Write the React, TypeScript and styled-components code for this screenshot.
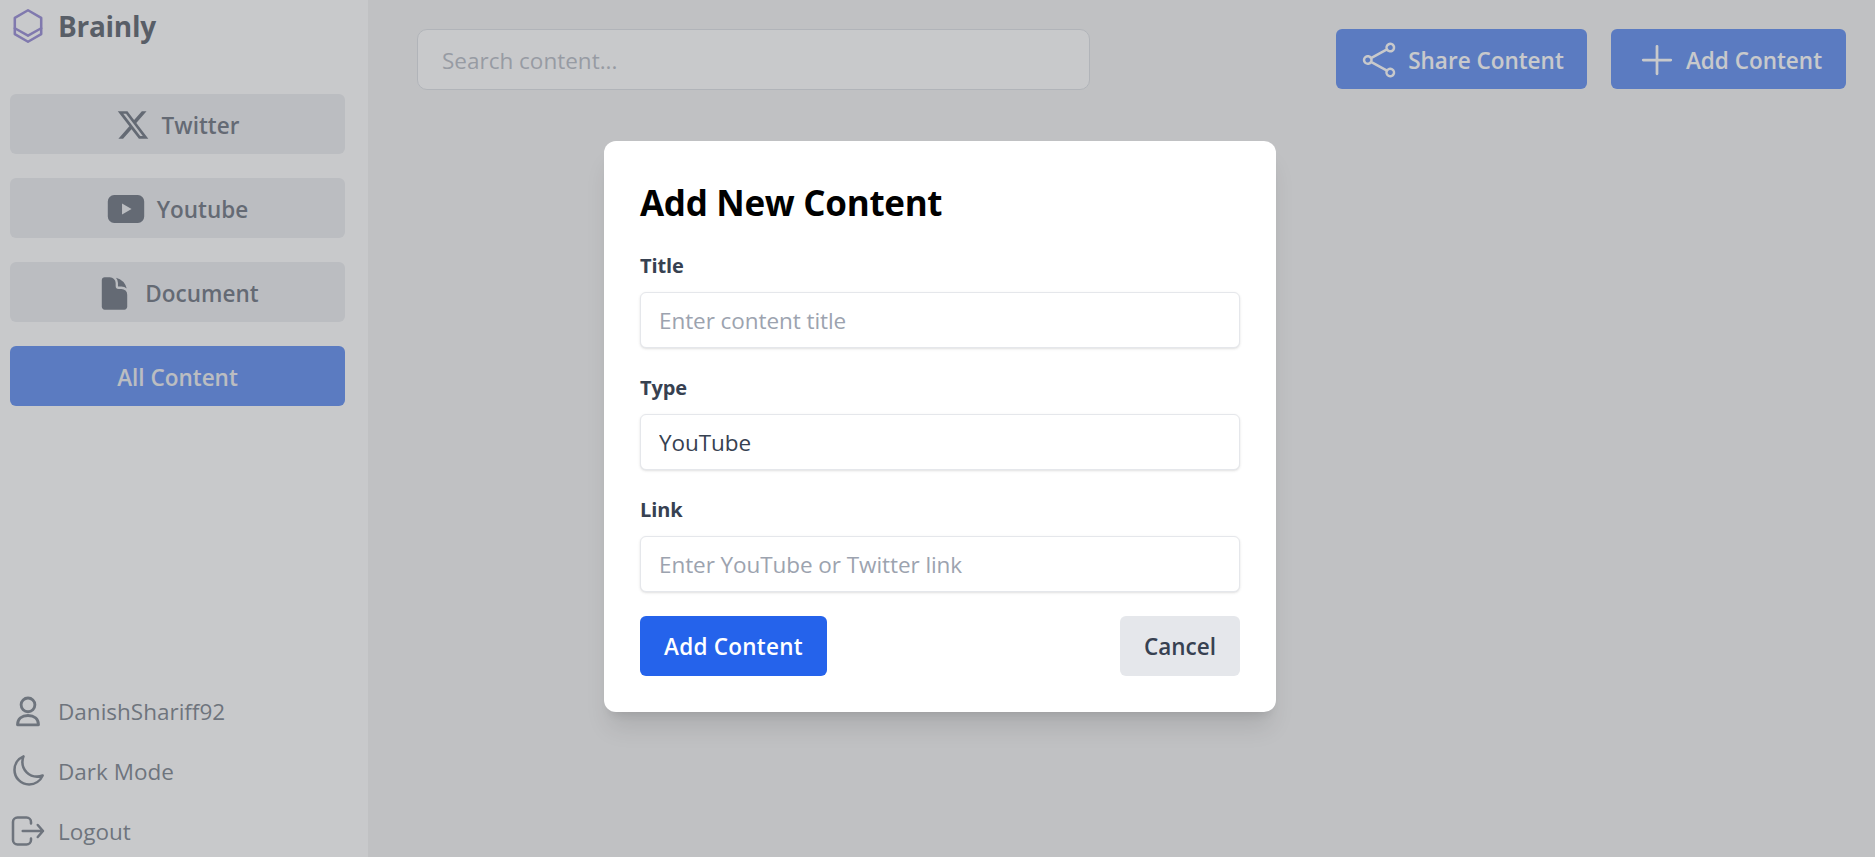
import styled, { createGlobalStyle } from 'styled-components';
import type { ReactNode } from 'react';

const GlobalStyle = createGlobalStyle`
  html, body {
    margin: 0;
    padding: 0;
    height: 100%;
    overflow: hidden;
    font-family: "Open Sans", "Noto Sans", "Liberation Sans", sans-serif;
  }
  * { box-sizing: border-box; }
`;

const Page = styled.div`
  position: relative;
  display: flex;
  width: 100%;
  height: 857px;
  background: #efefef;
`;

const Sidebar = styled.aside`
  display: flex;
  flex-direction: column;
  width: 368px;
  flex-shrink: 0;
  padding: 0 23px 0 10px;
  background: #ffffff;
`;

const Brand = styled.div`
  display: flex;
  align-items: center;
  gap: 12px;
  height: 52px;
  margin-bottom: 42px;
  font-size: 28px;
  font-weight: 700;
  letter-spacing: -0.3px;
  color: #1f2937;
`;

const Nav = styled.nav`
  display: flex;
  flex-direction: column;
  gap: 24px;
`;

const NavButton = styled.button<{ $active?: boolean }>`
  display: flex;
  align-items: center;
  justify-content: center;
  gap: 12px;
  height: 60px;
  padding: 2px 0 0;
  border: 0;
  border-radius: 6px;
  font: inherit;
  font-size: 22.5px;
  font-weight: 600;
  background: ${p => (p.$active ? '#2563eb' : '#e5e7eb')};
  color: ${p => (p.$active ? '#e5e7eb' : '#374151')};
`;

const SidebarFooter = styled.div`
  display: flex;
  flex-direction: column;
  gap: 24px;
  margin-top: auto;
  padding-bottom: 8px;
`;

const FooterItem = styled.div`
  display: flex;
  align-items: center;
  gap: 12px;
  height: 36px;
  font-size: 22.5px;
  color: #4b5563;
`;

const Main = styled.main`
  flex: 1;
  padding: 29px 29px 0 49px;
`;

const TopBar = styled.header`
  display: flex;
  justify-content: space-between;
  align-items: flex-start;
`;

const Search = styled.input`
  width: 673px;
  height: 61px;
  padding: 2px 24px 0;
  border: 1px solid #d1d5db;
  border-radius: 10px;
  background: #ffffff;
  font: inherit;
  font-size: 22.5px;
  &::placeholder { color: #9ca3af; opacity: 1; }
`;

const TopActions = styled.div`
  display: flex;
  gap: 24px;
`;

const ActionButton = styled.button<{ $width: number; $gap: number }>`
  display: flex;
  align-items: center;
  justify-content: center;
  gap: ${p => p.$gap}px;
  width: ${p => p.$width}px;
  height: 60px;
  padding: 2px 0 0;
  border: 0;
  border-radius: 6px;
  background: #2563eb;
  color: #ffffff;
  font: inherit;
  font-size: 22.5px;
  font-weight: 600;
`;

const Overlay = styled.div`
  position: absolute;
  inset: 0;
  display: flex;
  align-items: center;
  justify-content: center;
  padding: 0 0 5px 5px;
  background: rgba(145, 147, 151, 0.5);
`;

const Modal = styled.form`
  display: flex;
  flex-direction: column;
  gap: 26px;
  width: 672px;
  padding: 36px;
  border-radius: 12px;
  background: #ffffff;
  box-shadow: 0 20px 25px -5px rgba(0, 0, 0, 0.1), 0 8px 10px -6px rgba(0, 0, 0, 0.1);
`;

const Title = styled.h2`
  margin: 0 0 -3px;
  font-size: 35px;
  line-height: 52px;
  font-weight: 700;
  letter-spacing: -0.3px;
  color: #000000;
`;

const Field = styled.div`
  display: flex;
  flex-direction: column;
  gap: 13px;
`;

const Label = styled.label`
  padding-top: 1px;
  font-size: 20px;
  line-height: 26px;
  font-weight: 700;
  letter-spacing: -0.1px;
  color: #374151;
`;

const inputStyles = `
  width: 100%;
  height: 56px;
  padding: 2px 18px 0;
  border: 1px solid #e5e7eb;
  border-radius: 6px;
  background: #ffffff;
  box-shadow: 0 1px 3px 0 rgba(0, 0, 0, 0.1), 0 1px 2px -1px rgba(0, 0, 0, 0.1);
  font: inherit;
  font-size: 22.5px;
  letter-spacing: -0.07px;
  color: #374151;
  outline: none;
`;

const TextInput = styled.input`
  ${inputStyles}
  &::placeholder { color: #9ca3af; opacity: 1; }
`;

const SelectInput = styled.select`
  ${inputStyles}
  appearance: none;
`;

const ModalActions = styled.div`
  display: flex;
  justify-content: space-between;
  margin-top: -2px;
`;

const ModalButton = styled.button<{ $primary?: boolean }>`
  height: 60px;
  padding: 2px 24px 0;
  border: 0;
  border-radius: 6px;
  font: inherit;
  font-size: 22.5px;
  font-weight: 600;
  letter-spacing: ${p => (p.$primary ? '0.25px' : '0')};
  background: ${p => (p.$primary ? '#2563eb' : '#e5e7eb')};
  color: ${p => (p.$primary ? '#ffffff' : '#374151')};
`;

const Icon = ({ size, fill, stroke, width, children }: {
  size: number; fill?: boolean; stroke?: string; width?: number; children: ReactNode;
}) => (
  <svg
    width={size}
    height={size}
    viewBox="0 0 24 24"
    fill={fill ? 'currentColor' : 'none'}
    stroke={fill ? 'none' : stroke || 'currentColor'}
    strokeWidth={width || 1.5}
    strokeLinecap="round"
    strokeLinejoin="round"
  >
    {children}
  </svg>
);

export default function App() {
  return (
    <Page>
      <GlobalStyle />
      <Sidebar>
        <Brand>
          <Icon size={36} stroke="#6f5fc4" width={1.7}>
            <path d="M12 1.500 20.800 6.600v10.800L12 22.500 3.200 17.400V6.600Z" />
            <path d="M3.200 13.500 12 18.400l8.800-4.900" />
          </Icon>
          Brainly
        </Brand>
        <Nav>
          <NavButton type="button">
            <Icon size={34} fill>
              <path d="M18.244 2.250h3.308l-7.227 8.260 8.502 11.240H16.170l-5.214-6.817L4.990 21.750H1.680l7.730-8.835L1.254 2.250H8.080l4.713 6.231zm-1.161 17.520h1.833L7.084 4.126H5.117z" />
            </Icon>
            Twitter
          </NavButton>
          <NavButton type="button">
            <Icon size={38} fill>
              <path
                fillRule="evenodd"
                d="M4.500 3.200h15a4 4 0 0 1 4 4v9.600a4 4 0 0 1-4 4h-15a4 4 0 0 1-4-4V7.200a4 4 0 0 1 4-4ZM9.500 8.500v7l6-3.500Z"
              />
            </Icon>
            Youtube
          </NavButton>
          <NavButton type="button">
            <Icon size={37} fill>
              <path d="M5.625 1.500c-1.036 0-1.875.840-1.875 1.875v17.250c0 1.035.840 1.875 1.875 1.875h12.750c1.035 0 1.875-.840 1.875-1.875V12.750A3.750 3.750 0 0 0 16.500 9h-1.875a1.875 1.875 0 0 1-1.875-1.875V5.250A3.750 3.750 0 0 0 9 1.500H5.625Z" />
              <path d="M12.971 1.816A5.230 5.230 0 0 1 14.250 5.250v1.875c0 .207.168.375.375.375H16.500a5.230 5.230 0 0 1 3.434 1.279 9.768 9.768 0 0 0-6.963-6.963Z" />
            </Icon>
            Document
          </NavButton>
          <NavButton type="button" $active>All Content</NavButton>
        </Nav>
        <SidebarFooter>
          <FooterItem>
            <Icon size={36} width={1.9}>
              <circle cx="12" cy="7.900" r="4.600" />
              <path d="M5 21.200c0-4 3-6.200 7-6.200s7 2.200 7 6.200Z" />
            </Icon>
            DanishShariff92
          </FooterItem>
          <FooterItem>
            <Icon size={36} width={1.7}>
              <path d="M21.752 15.002A9.720 9.720 0 0 1 18 15.750c-5.385 0-9.750-4.365-9.750-9.750 0-1.330.266-2.597.748-3.752A9.753 9.753 0 0 0 3 11.250C3 16.635 7.365 21 12.750 21a9.753 9.753 0 0 0 9.002-5.998Z" />
            </Icon>
            Dark Mode
          </FooterItem>
          <FooterItem>
            <Icon size={36} width={1.7}>
              <path d="M14 7V6a3 3 0 0 0-3-3H5a3 3 0 0 0-3 3v12a3 3 0 0 0 3 3h6a3 3 0 0 0 3-3v-1M18.500 8l3.500 4-3.500 4M22 12H8.500" />
            </Icon>
            Logout
          </FooterItem>
        </SidebarFooter>
      </Sidebar>
      <Main>
        <TopBar>
          <Search placeholder="Search content..." />
          <TopActions>
            <ActionButton type="button" $width={251} $gap={9}>
              <Icon size={40}>
                <path d="M7.217 10.907a2.250 2.250 0 1 0 0 2.186m0-2.186c.180.324.283.696.283 1.093s-.103.770-.283 1.093m0-2.186 9.566-5.314m-9.566 7.500 9.566 5.314m0 0a2.250 2.250 0 1 0 3.935 2.186 2.250 2.250 0 0 0-3.935-2.186Zm0-12.814a2.250 2.250 0 1 0 3.933-2.185 2.250 2.250 0 0 0-3.933 2.185Z" />
              </Icon>
              Share Content
            </ActionButton>
            <ActionButton type="button" $width={235} $gap={7}>
              <Icon size={44}>
                <path d="M12 4.500v15m7.500-7.500h-15" />
              </Icon>
              Add Content
            </ActionButton>
          </TopActions>
        </TopBar>
      </Main>
      <Overlay>
        <Modal>
          <Title>Add New Content</Title>
          <Field>
            <Label>Title</Label>
            <TextInput placeholder="Enter content title" />
          </Field>
          <Field>
            <Label>Type</Label>
            <SelectInput defaultValue="youtube">
              <option value="youtube">YouTube</option>
              <option value="twitter">Twitter</option>
            </SelectInput>
          </Field>
          <Field>
            <Label>Link</Label>
            <TextInput placeholder="Enter YouTube or Twitter link" />
          </Field>
          <ModalActions>
            <ModalButton type="button" $primary>Add Content</ModalButton>
            <ModalButton type="button">Cancel</ModalButton>
          </ModalActions>
        </Modal>
      </Overlay>
    </Page>
  );
}
